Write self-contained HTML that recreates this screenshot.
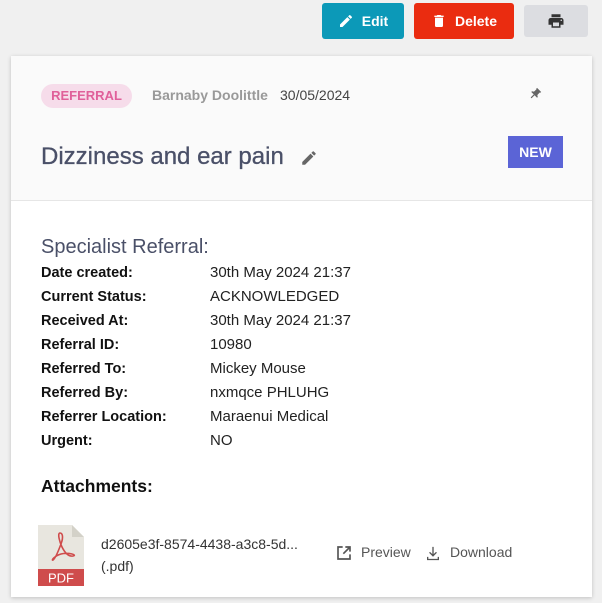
<!DOCTYPE html>
<html><head><style>
body{margin:0;width:602px;height:603px;background:#f0f0f0;font-family:"Liberation Sans",sans-serif;position:relative;overflow:hidden}
.btn{position:absolute;top:3px;height:36px;border-radius:3px;color:#fff;font-weight:bold;font-size:14px;display:flex;align-items:center;justify-content:center;gap:8px}
.card{position:absolute;left:11px;top:56px;width:581px;height:541px;background:#fff;box-shadow:0 1px 4px rgba(0,0,0,.2)}
.head{position:absolute;left:0;top:0;width:581px;height:144px;background:#fafafa;border-bottom:1px solid #e6e6e6}
.a{position:absolute;white-space:nowrap}
.row{position:absolute;left:30px;font-size:15px;color:#222}
.row b{display:inline-block;width:169px;color:#111;font-size:14.5px}
</style></head><body>
<div class="btn" style="left:322px;width:82px;background:#0c99b8"><svg width="16" height="16" viewBox="0 0 24 24"><path fill="#fff" d="M3 17.25V21h3.75L17.81 9.94l-3.75-3.75zM20.71 7.04a1 1 0 000-1.41l-2.34-2.34a1 1 0 00-1.41 0l-1.83 1.83 3.75 3.75z"/></svg>Edit</div>
<div class="btn" style="left:414px;width:100px;background:#ea2c10"><svg width="16" height="18" viewBox="0 0 24 24"><path fill="#fff" d="M6 19a2 2 0 002 2h8a2 2 0 002-2V7H6zM19 4h-3.5l-1-1h-5l-1 1H5v2h14z"/></svg>Delete</div>
<div class="btn" style="left:524px;top:5px;height:32px;width:64px;background:#dcdde1"><svg width="18" height="18" viewBox="0 0 24 24"><path fill="#333" d="M19 8H5a3 3 0 00-3 3v6h4v4h12v-4h4v-6a3 3 0 00-3-3zm-3 11H8v-5h8zm3-7a1 1 0 110-2 1 1 0 010 2zm-1-9H6v4h12z"/></svg></div>
<div class="card">
<div class="head">
<div class="a" style="left:30px;top:28px;width:91px;height:24px;border-radius:12px;background:#f6dcea;color:#e0609a;font-weight:bold;font-size:13px;line-height:24px;text-align:center">REFERRAL</div>
<div class="a" style="left:141px;top:31px;font-size:14px;color:#999;font-weight:bold">Barnaby Doolittle</div>
<div class="a" style="left:269px;top:31px;font-size:14px;color:#444">30/05/2024</div>
<svg class="a" style="left:517px;top:31px" width="14" height="14" viewBox="0 0 24 24"><path fill="#666" d="M16 9V4h1V2H7v2h1v5c0 1.66-1.34 3-3 3v2h5.97v7l1 1 1-1v-7H19v-2c-1.66 0-3-1.34-3-3z" transform="rotate(45 12 12)"/></svg>
<div class="a" style="left:30px;top:87px;font-size:24px;color:#4a5068;-webkit-text-stroke:0.3px #4a5068">Dizziness and ear pain</div>
<svg class="a" style="left:289px;top:93px" width="18" height="18" viewBox="0 0 24 24"><path fill="#666" d="M3 17.25V21h3.75L17.81 9.94l-3.75-3.75zM20.71 7.04a1 1 0 000-1.41l-2.34-2.34a1 1 0 00-1.41 0l-1.83 1.83 3.75 3.75z"/></svg>
<div class="a" style="left:497px;top:80px;width:55px;height:32px;background:#5b64d6;color:#fff;font-weight:bold;font-size:14px;line-height:32px;text-align:center">NEW</div>
</div>
<div class="a" style="left:30px;top:180px;font-size:20px;color:#4a5068">Specialist Referral:</div>
<div class="row" style="top:208px"><b>Date created:</b>30th May 2024 21:37</div>
<div class="row" style="top:232px"><b>Current Status:</b>ACKNOWLEDGED</div>
<div class="row" style="top:256px"><b>Received At:</b>30th May 2024 21:37</div>
<div class="row" style="top:280px"><b>Referral ID:</b>10980</div>
<div class="row" style="top:304px"><b>Referred To:</b>Mickey Mouse</div>
<div class="row" style="top:328px"><b>Referred By:</b>nxmqce PHLUHG</div>
<div class="row" style="top:352px"><b>Referrer Location:</b>Maraenui Medical</div>
<div class="row" style="top:376px"><b>Urgent:</b>NO</div>
<div class="a" style="left:30px;top:420px;font-size:17.5px;font-weight:bold;color:#111">Attachments:</div>
<svg class="a" style="left:27px;top:469px" width="46" height="61" viewBox="0 0 46 61"><path d="M0 0h34l12 12v49H0z" fill="#e8e6df"/><path d="M34 0v12h12z" fill="#d3d1c8"/><rect y="44" width="46" height="17" fill="#cf4c4c"/><text x="23" y="57.5" font-family="Liberation Sans" font-size="13" fill="#fff" text-anchor="middle">PDF</text><path d="M22 8c-3 0 0 10 2 14s6 10 11 9-5-4-12-2-10 7-8 6 5-8 8-16 1-11-1-11z" fill="none" stroke="#cf4c4c" stroke-width="1.6"/></svg>
<div class="a" style="left:90px;top:480px;font-size:14px;color:#333">d2605e3f-8574-4438-a3c8-5d...</div>
<div class="a" style="left:90px;top:502px;font-size:14px;color:#333">(.pdf)</div>
<svg class="a" style="left:325px;top:489px" width="16" height="16" viewBox="0 0 24 24"><path fill="none" stroke="#555" stroke-width="2.5" d="M10 3H3v18h18v-7M14 3h7v7M21 3l-10 10"/></svg>
<div class="a" style="left:350px;top:488px;font-size:14px;color:#555">Preview</div>
<svg class="a" style="left:414px;top:489px" width="16" height="17" viewBox="0 0 24 24"><path fill="#555" d="M11 2h2v11l3.5-3.5 1.4 1.4L12 16.8l-5.9-5.9 1.4-1.4L11 13zM3 17h2v3h14v-3h2v5H3z"/></svg>
<div class="a" style="left:439px;top:488px;font-size:14px;color:#555">Download</div>
</div>
</body></html>
